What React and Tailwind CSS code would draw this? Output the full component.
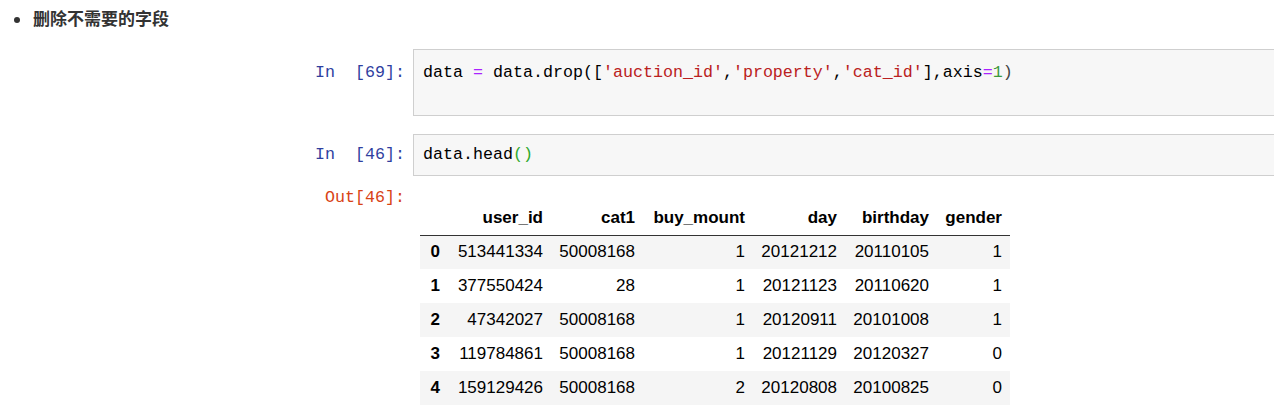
import React from "react";

const columns = ["user_id", "cat1", "buy_mount", "day", "birthday", "gender"];
const widths = ["w-[101px]", "w-[92px]", "w-[110px]", "w-[92px]", "w-[92px]", "w-[73px]"];

const rows = [
  ["0", "513441334", "50008168", "1", "20121212", "20110105", "1"],
  ["1", "377550424", "28", "1", "20121123", "20110620", "1"],
  ["2", "47342027", "50008168", "1", "20120911", "20101008", "1"],
  ["3", "119784861", "50008168", "1", "20121129", "20120327", "0"],
  ["4", "159129426", "50008168", "2", "20120808", "20100825", "0"],
];

const mono = { fontFamily: '"Liberation Mono", "DejaVu Sans Mono", monospace' };

function Prompt({ children, className }) {
  return (
    <div
      className={`w-[406px] shrink-0 pr-[1px] text-right text-[16.67px] leading-[24px] whitespace-pre ${className}`}
      style={mono}
    >
      {children}
    </div>
  );
}

export default function App() {
  return (
    <div
      className="w-[1274px] h-[418px] overflow-hidden bg-white text-black"
      style={{ fontFamily: '"Liberation Sans", "Noto Sans CJK SC", sans-serif' }}
    >
      {/* Heading */}
      <div className="flex items-center pt-[8px] pl-[14px] h-[31px]">
        <span className="w-[6px] h-[6px] rounded-full bg-[#333] mr-[13px]" />
        <span className="text-[17px] font-bold leading-[24px] text-[#333]">删除不需要的字段</span>
      </div>

      {/* In [69] */}
      <div className="flex mt-[18px]">
        <Prompt className="pt-[12px] text-[#303F9F]">{"In  [69]:"}</Prompt>
        <div
          className="ml-[7px] flex-1 h-[67px] pt-[11px] pl-[9px] bg-[#f7f7f7] border-y border-l border-[#cfcfcf] text-[16.67px] leading-[24px] whitespace-pre"
          style={mono}
        >
          <span>data </span>
          <span className="text-[#AA22FF]">=</span>
          <span> data.drop([</span>
          <span className="text-[#BA2121]">'auction_id'</span>
          <span>,</span>
          <span className="text-[#BA2121]">'property'</span>
          <span>,</span>
          <span className="text-[#BA2121]">'cat_id'</span>
          <span>],axis</span>
          <span className="text-[#AA22FF]">=</span>
          <span className="text-[#3c9a3c]">1</span>
          <span className="text-[#444]">)</span>
        </div>
      </div>

      {/* In [46] */}
      <div className="flex mt-[18px]">
        <Prompt className="pt-[9px] text-[#303F9F]">{"In  [46]:"}</Prompt>
        <div
          className="ml-[7px] flex-1 h-[42px] pt-[8px] pl-[9px] bg-[#f7f7f7] border-y border-l border-[#cfcfcf] text-[16.67px] leading-[24px] whitespace-pre"
          style={mono}
        >
          <span>data.head</span>
          <span className="text-[#2eaa2e]">()</span>
        </div>
      </div>

      {/* Out [46] */}
      <div className="flex mt-[8px]">
        <Prompt className="pt-[2px] text-[#D84315]">{"Out[46]:"}</Prompt>
        <div className="ml-[14px] pt-[17px]">
          <table className="table-fixed border-collapse text-[17px] leading-[20px]">
            <thead>
              <tr className="h-[34px] border-b border-[#333]">
                <th className="w-[30px]" />
                {columns.map((c, i) => (
                  <th key={c} className={`${widths[i]} text-right font-bold pr-[8px]`}>
                    {c}
                  </th>
                ))}
              </tr>
            </thead>
            <tbody>
              {rows.map((r, ri) => (
                <tr key={ri} className={`h-[34px] ${ri % 2 === 0 ? "bg-[#f5f5f5]" : "bg-white"}`}>
                  <th className="text-right font-bold pr-[10px]">{r[0]}</th>
                  {r.slice(1).map((v, ci) => (
                    <td key={ci} className="text-right pr-[8px]">
                      {v}
                    </td>
                  ))}
                </tr>
              ))}
            </tbody>
          </table>
        </div>
      </div>
    </div>
  );
}
